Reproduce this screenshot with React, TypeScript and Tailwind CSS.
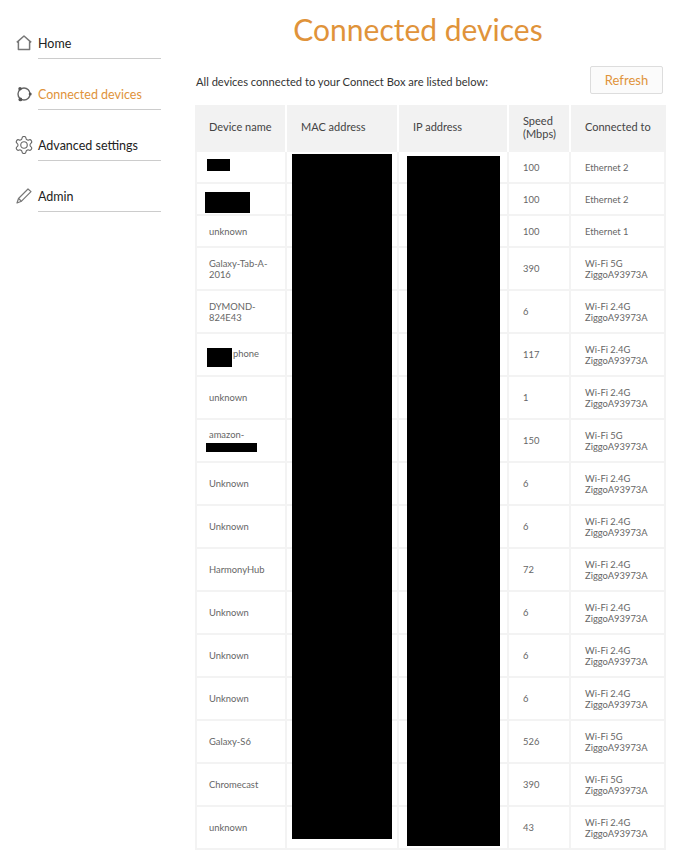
const FONT = "font-['Lato','Open_Sans',sans-serif]";

type Device = {
  name: React.ReactNode;
  speed: number;
  band: string;
  ssid?: string;
};

const Block = ({ className }: { className: string }) => (
  <span className={`inline-block bg-black align-middle ${className}`} />
);

const devices: Device[] = [
  { name: <Block className="ml-[-2px] h-[12px] w-[23px] translate-y-[-2px]" />, speed: 100, band: "Ethernet 2" },
  { name: <Block className="ml-[-4px] h-[21px] w-[45px] translate-y-[3px]" />, speed: 100, band: "Ethernet 2" },
  { name: "unknown", speed: 100, band: "Ethernet 1" },
  { name: "Galaxy-Tab-A-2016", speed: 390, band: "Wi-Fi 5G", ssid: "ZiggoA93973A" },
  { name: "DYMOND-824E43", speed: 6, band: "Wi-Fi 2.4G", ssid: "ZiggoA93973A" },
  {
    name: (
      <>
        <Block className="ml-[-2px] h-[19px] w-[25px] translate-y-[3px]" />
        <span className="ml-px">phone</span>
      </>
    ),
    speed: 117,
    band: "Wi-Fi 2.4G",
    ssid: "ZiggoA93973A",
  },
  { name: "unknown", speed: 1, band: "Wi-Fi 2.4G", ssid: "ZiggoA93973A" },
  {
    name: (
      <>
        amazon-
        <br />
        <Block className="ml-[-3px] h-[9px] w-[51px]" />
      </>
    ),
    speed: 150,
    band: "Wi-Fi 5G",
    ssid: "ZiggoA93973A",
  },
  { name: "Unknown", speed: 6, band: "Wi-Fi 2.4G", ssid: "ZiggoA93973A" },
  { name: "Unknown", speed: 6, band: "Wi-Fi 2.4G", ssid: "ZiggoA93973A" },
  { name: "HarmonyHub", speed: 72, band: "Wi-Fi 2.4G", ssid: "ZiggoA93973A" },
  { name: "Unknown", speed: 6, band: "Wi-Fi 2.4G", ssid: "ZiggoA93973A" },
  { name: "Unknown", speed: 6, band: "Wi-Fi 2.4G", ssid: "ZiggoA93973A" },
  { name: "Unknown", speed: 6, band: "Wi-Fi 2.4G", ssid: "ZiggoA93973A" },
  { name: "Galaxy-S6", speed: 526, band: "Wi-Fi 5G", ssid: "ZiggoA93973A" },
  { name: "Chromecast", speed: 390, band: "Wi-Fi 5G", ssid: "ZiggoA93973A" },
  { name: "unknown", speed: 43, band: "Wi-Fi 2.4G", ssid: "ZiggoA93973A" },
];

const HomeIcon = () => (
  <svg viewBox="0 0 16 16" className="h-4 w-4" fill="none" stroke="#777" strokeWidth="1.5">
    <path d="M.8 7.4 8 1l7.2 6.4M2.4 6.4v8.2h11.2V6.4" strokeLinejoin="round" />
  </svg>
);

const DevicesIcon = () => (
  <svg viewBox="0 0 16 16" className="h-4 w-4" fill="none" stroke="#666" strokeWidth="1.4">
    <circle cx="8" cy="8" r="6" />
    <circle cx="4" cy="2.8" r="1.7" fill="#555" stroke="none" />
    <circle cx="14.2" cy="8" r="1.5" fill="#555" stroke="none" />
    <circle cx="4.4" cy="13.4" r="1.9" fill="#555" stroke="none" />
  </svg>
);

const GearIcon = () => (
  <svg viewBox="1.5 1.5 21 21" className="ml-[-1px] mt-[-1px] h-[18px] w-[18px]" fill="none" stroke="#666" strokeWidth="1.3">
    <path d="M9.67 4.14a2.34 2.34 0 0 1 4.66 0 2.34 2.34 0 0 0 3.32 1.92 2.34 2.34 0 0 1 2.33 4.03 2.34 2.34 0 0 0 0 3.82 2.34 2.34 0 0 1-2.33 4.03 2.34 2.34 0 0 0-3.32 1.92 2.34 2.34 0 0 1-4.66 0 2.34 2.34 0 0 0-3.32-1.92 2.34 2.34 0 0 1-2.33-4.03 2.34 2.34 0 0 0 0-3.82 2.34 2.34 0 0 1 2.33-4.03 2.34 2.34 0 0 0 3.32-1.92" />
    <circle cx="12" cy="12" r="3.8" />
  </svg>
);

const PencilIcon = () => (
  <svg viewBox="0 0 16 16" className="h-4 w-4" fill="none" stroke="#777" strokeWidth="1.2">
    <path d="M12 1 15 3.6 5.5 13.2 1 15 2.5 10.5Z" strokeLinejoin="round" />
    <path d="M2.5 10.5 5.5 13.2" />
  </svg>
);

const navItems = [
  { label: "Home", icon: <HomeIcon /> },
  { label: "Connected devices", icon: <DevicesIcon />, active: true },
  { label: "Advanced settings", icon: <GearIcon /> },
  { label: "Admin", icon: <PencilIcon /> },
];

const Sidebar = () => (
  <nav className="flex w-[195px] shrink-0 flex-col gap-[26px] pl-4 pt-[34px]">
    {navItems.map((item) => (
      <div key={item.label} className="flex h-[25px] items-start">
        <div className="mt-[1px] w-[22px] shrink-0">{item.icon}</div>
        <div
          className={`h-[25px] w-[123px] border-b border-[#cccccc] pt-px text-[12.5px] leading-[18px] ${
            item.active ? "text-[#e0933a]" : "text-[#222222]"
          }`}
        >
          {item.label}
        </div>
      </div>
    ))}
  </nav>
);

const headCell =
  "border-x-2 border-white bg-[#f2f2f2] pb-[2px] text-left align-middle text-[11px] font-normal leading-[13px] text-[#444444] first:border-l-[#f2f2f2] last:border-r-[#f2f2f2]";
const bodyCell = "border-2 border-[#f3f3f3] align-middle text-[9.4px] leading-[11px] text-[#666666]";

export default function App() {
  return (
    <div className={`flex min-h-[857px] w-[700px] bg-white ${FONT}`}>
      <Sidebar />
      <main className="w-[470px]">
        <h1 className="mt-[12px] pr-[24px] text-center text-[30px] font-normal leading-[34px] text-[#e0933a]">
          Connected devices
        </h1>
        <div className="mt-[20px] flex h-[28px] items-center justify-between pr-[2px]">
          <p className="pl-px pt-[5px] text-[11.15px] text-[#333333]">
            All devices connected to your Connect Box are listed below:
          </p>
          <button className="h-[28px] w-[73px] rounded-[2px] border border-[#dddddd] bg-[#fbfbfb] pt-[2px] text-[13px] text-[#e0933a]">
            Refresh
          </button>
        </div>
        <div className="relative mt-[11px]">
          <table className="w-[469px] table-fixed border-collapse">
            <colgroup>
              <col className="w-[90px]" />
              <col className="w-[112px]" />
              <col className="w-[110px]" />
              <col className="w-[62px]" />
              <col className="w-[95px]" />
            </colgroup>
            <thead>
              <tr className="h-[46px]">
                <th className={`${headCell} pl-[12px] pr-[6px]`}>Device name</th>
                <th className={`${headCell} pl-[14px] pr-[8px]`}>MAC address</th>
                <th className={`${headCell} pl-[14px] pr-[8px]`}>IP address</th>
                <th className={`${headCell} pl-[14px] pr-[8px]`}>Speed (Mbps)</th>
                <th className={`${headCell} pl-[14px] pr-[8px]`}>Connected to</th>
              </tr>
            </thead>
            <tbody>
              {devices.map((d, i) => (
                <tr key={i} className={d.ssid ? "h-[43px]" : "h-[32px]"}>
                  <td className={`${bodyCell} px-[12px]`}>{d.name}</td>
                  <td className={bodyCell} />
                  <td className={bodyCell} />
                  <td className={`${bodyCell} px-[14px]`}>{d.speed}</td>
                  <td className={`${bodyCell} pl-[14px]`}>
                    {d.band}
                    {d.ssid && (
                      <>
                        <br />
                        {d.ssid}
                      </>
                    )}
                  </td>
                </tr>
              ))}
            </tbody>
          </table>
          {/* redaction bars laid over the address columns */}
          <div className="absolute left-[97px] top-[49px] h-[685px] w-[100px] bg-black" />
          <div className="absolute left-[212px] top-[51px] h-[690px] w-[93px] bg-black" />
        </div>
      </main>
    </div>
  );
}
